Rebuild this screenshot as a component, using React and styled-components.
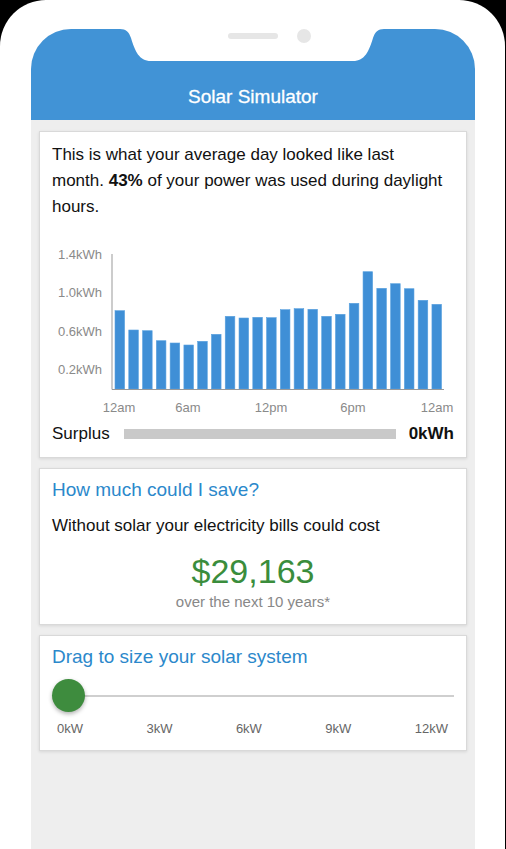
import React from 'react'
import styled, { createGlobalStyle } from 'styled-components'

const GlobalStyle = createGlobalStyle`
  html, body {
    margin: 0;
    padding: 0;
    background: #000;
  }
  body {
    font-family: 'Liberation Sans', Arial, sans-serif;
  }
`

const Phone = styled.div`
  width: 505px;
  height: 849px;
  background: #fff;
  border-radius: 46px 46px 0 0;
  padding: 29px 0 0 31px;
  box-sizing: border-box;
  overflow: hidden;
`

const Screen = styled.div`
  width: 444px;
  height: 820px;
  background: #eeeeee;
  border-radius: 40px 40px 0 0;
  overflow: hidden;
  display: flex;
  flex-direction: column;
`

const Header = styled.header`
  position: relative;
  height: 91px;
  background: #4193d6;
  display: flex;
  align-items: flex-end;
  justify-content: center;
  padding-bottom: 12px;
  box-sizing: border-box;
  flex-shrink: 0;
`

const Title = styled.h1`
  margin: 0;
  color: #fff;
  font-size: 19px;
  line-height: 22px;
  font-weight: 400;
  -webkit-text-stroke: 0.3px #fff;
`

const Notch = styled.svg`
  position: absolute;
  top: 0;
  left: 89px;
`

const Cards = styled.main`
  display: flex;
  flex-direction: column;
  gap: 10px;
  padding: 11px 8px 0;
`

const Card = styled.section`
  background: #fff;
  border: 1px solid #d9d9d9;
  box-shadow: 0 1px 3px rgba(0, 0, 0, 0.1);
  padding: ${(p) => p.$pad || '10px 12px 12px'};
`

const Text = styled.p`
  margin: 0;
  font-size: 17px;
  line-height: 26px;
  color: #111;
`

const Lead = styled(Text)`
  padding-right: 8px;
`

const Heading = styled.h2`
  margin: 0;
  font-size: 19px;
  line-height: 24px;
  font-weight: 400;
  color: #2b88cb;
`

const Chart = styled.svg`
  display: block;
  margin-top: 20px;
`

const SurplusRow = styled.div`
  display: flex;
  align-items: center;
  height: 20px;
  margin-top: 4px;
  font-size: 17px;
  color: #111;
`

const SurplusBar = styled.div`
  flex: 1;
  height: 10px;
  background: #c9c9c9;
  margin: 0 13px 0 14px;
`

const SurplusValue = styled.b`
  font-weight: 700;
`

const Amount = styled.div`
  margin-top: 12px;
  text-align: center;
  font-size: 34px;
  line-height: 40px;
  color: #3a8d3c;
`

const Note = styled.div`
  margin-top: 1px;
  text-align: center;
  font-size: 15px;
  line-height: 20px;
  color: #888;
`

const Slider = styled.div`
  position: relative;
  margin-top: 10px;
  height: 34px;
  display: flex;
  align-items: center;
`

const Track = styled.div`
  flex: 1;
  height: 2px;
  margin-left: 16px;
  background: #cfcfcf;
`

const Thumb = styled.div`
  position: absolute;
  left: 0;
  top: 0;
  width: 33px;
  height: 33px;
  border-radius: 50%;
  background: #3e8c3e;
  box-shadow: 0 2px 4px rgba(0, 0, 0, 0.3);
`

const Ticks = styled.div`
  display: flex;
  justify-content: space-between;
  margin-top: 8px;
  padding: 0 6px 0 5px;
  font-size: 13px;
  line-height: 16px;
  color: #666;
`

const bars = [310.7, 330, 330.7, 340.7, 343, 345, 341.3, 334.3, 316.3, 318, 317.3, 317.7,
  309.7, 308.7, 309.3, 316.3, 314.3, 303.3, 271.7, 288.3, 283.7, 288.7, 300.3, 304.3]

const yLabels = [['1.4kWh', 19.3], ['1.0kWh', 57], ['0.6kWh', 95.7], ['0.2kWh', 134]]
const xLabels = [['12am', 67], ['6am', 136], ['12pm', 219], ['6pm', 301], ['12am', 385]]

const UsageChart = () => (
  <Chart width="404" height="180" viewBox="0 0 404 180">
    {yLabels.map(([t, y]) => (
      <text key={t} x="50" y={y} textAnchor="end" fontSize="13" fill="#8a8a8a"
        fontFamily="'Liberation Sans', Arial, sans-serif">{t}</text>
    ))}
    {bars.map((top, i) => {
      const y = top - 240
      return (
        <rect key={i} x={63 + i * 13.78} y={y} width="9.6" height={149 - y}
          fill="#3f8fd6" stroke="#5aa2e0" strokeWidth="0.6" />
      )
    })}
    <line x1="60" y1="14" x2="60" y2="149.5" stroke="#999" strokeWidth="1" />
    <line x1="60" y1="149.5" x2="392" y2="149.5" stroke="#999" strokeWidth="1" />
    {xLabels.map(([t, x], i) => (
      <text key={i} x={x} y="171.7" textAnchor="middle" fontSize="13" fill="#8a8a8a"
        fontFamily="'Liberation Sans', Arial, sans-serif">{t}</text>
    ))}
  </Chart>
)

const App = () => (
  <>
    <GlobalStyle />
    <Phone>
      <Screen>
        <Header>
          <Notch width="264" height="32" viewBox="0 0 264 32">
            <path d="M0 0 C6 0 9 3 11 9 C15 22 19 32 31 32 H233 C245 32 249 22 253 9 C255 3 258 0 264 0 Z" fill="#fff" />
            <rect x="108" y="4" width="50" height="6" rx="3" fill="#e6e6e6" />
            <circle cx="184" cy="7" r="7" fill="#e6e6e6" />
          </Notch>
          <Title>Solar Simulator</Title>
        </Header>
        <Cards>
          <Card $pad="10px 12px 13px">
            <Lead>
              This is what your average day looked like last month. <b>43%</b> of your power was used during daylight hours.
            </Lead>
            <UsageChart />
            <SurplusRow>
              <span>Surplus</span>
              <SurplusBar />
              <SurplusValue>0kWh</SurplusValue>
            </SurplusRow>
          </Card>
          <Card $pad="9px 12px 12px">
            <Heading>How much could I save?</Heading>
            <Text style={{ marginTop: 11 }}>Without solar your electricity bills could cost</Text>
            <Amount>$29,163</Amount>
            <Note>over the next 10 years*</Note>
          </Card>
          <Card $pad="9px 12px 13px">
            <Heading>Drag to size your solar system</Heading>
            <Slider>
              <Track />
              <Thumb />
            </Slider>
            <Ticks>
              <span>0kW</span>
              <span>3kW</span>
              <span>6kW</span>
              <span>9kW</span>
              <span>12kW</span>
            </Ticks>
          </Card>
        </Cards>
      </Screen>
    </Phone>
  </>
)

export default App
